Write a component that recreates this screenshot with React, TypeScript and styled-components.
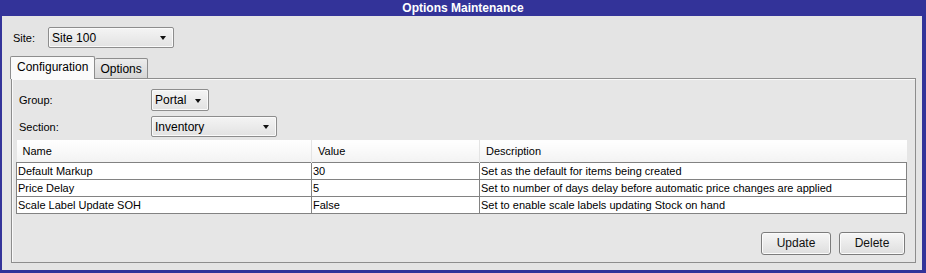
import styled, { createGlobalStyle } from "styled-components"

const GlobalStyle = createGlobalStyle`
    * { box-sizing: border-box; }
    body {
        margin: 0;
        font-family: "Liberation Sans", Arial, sans-serif;
        font-size: 11px;
        color: #000;
    }
`

const Frame = styled.div`
    display: flex;
    flex-direction: column;
    width: 926px;
    height: 273px;
`

const TitleBar = styled.div`
    height: 16px;
    background: #333399;
    color: #fff;
    font-weight: bold;
    font-size: 12px;
    line-height: 16px;
    text-align: center;
`

const Body = styled.div`
    flex: 1;
    background: #e4e4e4;
    border-left: 2px solid #333399;
    border-right: 4px solid #333399;
    border-bottom: 3px solid #333399;
    padding: 11px 4px 0 9px;
`

const SiteRow = styled.div`
    display: flex;
    align-items: center;
    height: 21px;
    padding-left: 2px;
    gap: 13px;
`

interface SelectProps {
    $width: number
    $height?: number
}

const Select = styled.div<SelectProps>`
    display: flex;
    align-items: center;
    justify-content: space-between;
    width: ${p => p.$width}px;
    height: ${p => p.$height ?? 21}px;
    padding: 0 7px 0 3px;
    font-size: 12px;
    border: 1px solid #8d8d8d;
    border-radius: 2px;
    background: linear-gradient(#f4f4f4, #e2e2e2);
    box-shadow: inset 0 0 0 1px #fafafa;
`

const Arrow = styled.span`
    width: 0;
    height: 0;
    border-left: 3.5px solid transparent;
    border-right: 3.5px solid transparent;
    border-top: 4px solid #111;
    margin-top: 1px;
`

const Tabs = styled.div`
    display: flex;
    align-items: flex-end;
    margin-top: 8px;
    height: 23px;
    position: relative;
    z-index: 1;
`

interface TabProps {
    $active?: boolean
}

const Tab = styled.div<TabProps>`
    height: ${p => p.$active ? 23 : 21}px;
    padding: 0 ${p => p.$active ? 6 : 5}px;
    font-size: 12px;
    line-height: ${p => p.$active ? 21 : 20}px;
    border: 1px solid #8d8d8d;
    border-bottom: ${p => p.$active ? "none" : "1px solid #8d8d8d"};
    border-left: ${p => p.$active ? "1px solid #8d8d8d" : "none"};
    border-radius: 2px 2px 0 0;
    background: ${p => p.$active ? "#fafafa" : "linear-gradient(#ececec, #d6d6d6)"};
    margin-left: ${p => p.$active ? -1 : 0}px;
`

const Panel = styled.div`
    margin: -1px 2px 0 0;
    border: 1px solid #8d8d8d;
    box-shadow: inset 1px 1px 0 #fafafa;
    background: #e6e6e6;
    padding: 10px 10px 7px 4px;
`

const FormRow = styled.div`
    display: flex;
    align-items: center;
    padding-left: 3px;
    & + & { margin-top: 5px; }
`

const Label = styled.span`
    width: 132px;
`

const Grid = styled.table`
    width: 890px;
    margin-top: 3px;
    border-collapse: collapse;
    table-layout: fixed;
    font-size: 11px;
`

const HeadCell = styled.th`
    height: 22px;
    padding: 0 6px;
    font-weight: normal;
    text-align: left;
    background: linear-gradient(#ffffff, #f3f3f3);
    border-left: 1px solid #e4e4e4;
    &:first-child { border-left: none; }
`

const Cell = styled.td`
    height: 17px;
    padding: 0 1px;
    border: 1px solid #828282;
    background: #fff;
    white-space: nowrap;
    overflow: hidden;
`

const ButtonRow = styled.div`
    display: flex;
    justify-content: flex-end;
    gap: 8px;
    margin-top: 18px;
`

interface ButtonProps {
    $width: number
}

const Button = styled.button<ButtonProps>`
    width: ${p => p.$width}px;
    height: 23px;
    font-family: inherit;
    font-size: 12px;
    color: #111;
    border: 1px solid #7c7c7c;
    border-radius: 3px;
    background: linear-gradient(#f6f6f6, #dedede);
    box-shadow: inset 0 0 0 1px #fbfbfb;
    padding: 0;
`

const rows = [
    { name: "Default Markup", value: "30", description: "Set as the default for items being created" },
    { name: "Price Delay", value: "5", description: "Set to number of days delay before automatic price changes are applied" },
    { name: "Scale Label Update SOH", value: "False", description: "Set to enable scale labels updating Stock on hand" },
]

export default function App() {
    return (
        <>
            <GlobalStyle />
            <Frame>
                <TitleBar>Options Maintenance</TitleBar>
                <Body>
                    <SiteRow>
                        <span>Site:</span>
                        <Select $width={126}>Site 100<Arrow /></Select>
                    </SiteRow>
                    <Tabs>
                        <Tab $active>Configuration</Tab>
                        <Tab>Options</Tab>
                    </Tabs>
                    <Panel>
                        <FormRow>
                            <Label>Group:</Label>
                            <Select $width={58} $height={22}>Portal<Arrow /></Select>
                        </FormRow>
                        <FormRow>
                            <Label>Section:</Label>
                            <Select $width={126}>Inventory<Arrow /></Select>
                        </FormRow>
                        <Grid>
                            <colgroup>
                                <col style={{ width: 295 }} />
                                <col style={{ width: 168 }} />
                                <col style={{ width: 427 }} />
                            </colgroup>
                            <thead>
                                <tr>
                                    <HeadCell>Name</HeadCell>
                                    <HeadCell>Value</HeadCell>
                                    <HeadCell>Description</HeadCell>
                                </tr>
                            </thead>
                            <tbody>
                                {rows.map(r => (
                                    <tr key={r.name}>
                                        <Cell>{r.name}</Cell>
                                        <Cell>{r.value}</Cell>
                                        <Cell>{r.description}</Cell>
                                    </tr>
                                ))}
                            </tbody>
                        </Grid>
                        <ButtonRow>
                            <Button $width={70}>Update</Button>
                            <Button $width={66}>Delete</Button>
                        </ButtonRow>
                    </Panel>
                </Body>
            </Frame>
        </>
    )
}
